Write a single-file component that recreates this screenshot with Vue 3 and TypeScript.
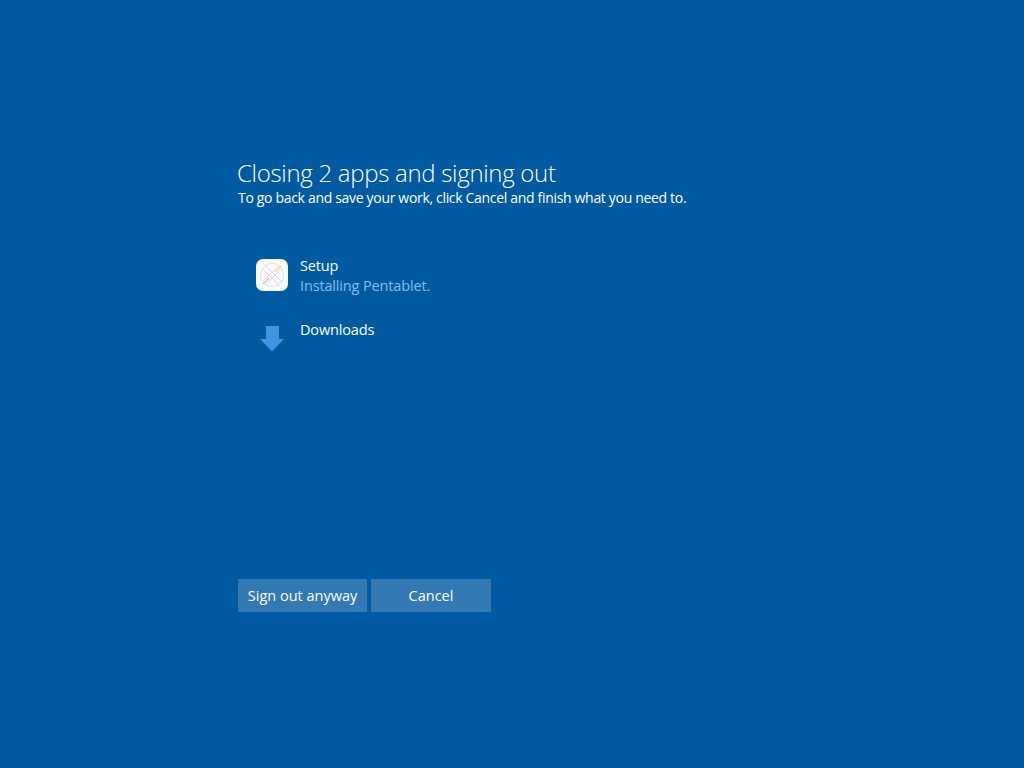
<script setup lang="ts">
const apps = [
  { name: 'Setup', status: 'Installing Pentablet.', icon: 'setup' },
  { name: 'Downloads', status: '', icon: 'down' },
]
</script>

<template>
  <div class="screen">
    <h1 class="title">Closing 2 apps and signing out</h1>
    <p class="sub">To go back and save your work, click Cancel and finish what you need to.</p>
    <ul class="apps">
      <li v-for="a in apps" :key="a.name" class="app">
        <svg v-if="a.icon === 'setup'" class="icon" width="32" height="32" viewBox="0 0 32 32">
          <rect width="32" height="32" rx="7" fill="#fbfcfd" />
          <path d="M5.5 20.5A11.5 11.5 0 0 1 10 6" fill="none" stroke="#ecd9de" stroke-width="1" />
          <path d="M10 6A11.5 11.5 0 0 1 26 10" fill="none" stroke="#f3e3cb" stroke-width="1" />
          <path d="M26 10A11.5 11.5 0 0 1 22 26" fill="none" stroke="#d5e1f0" stroke-width="1" />
          <path d="M22 26A11.5 11.5 0 0 1 5.5 20.5" fill="none" stroke="#e4e0ec" stroke-width="1" />
          <path d="M8.5 5.5L26.5 23.5M5.5 8.5L23.5 26.5" fill="none" stroke="#e3d3d9" stroke-width="1" />
          <path d="M23.5 5.5L5.5 23.5M26.5 8.5L8.5 26.5" fill="none" stroke="#eedcc8" stroke-width="1" />
          <path d="M7 25L13 19" stroke="#b4c4de" stroke-width="1.2" />
          <path d="M19 13L25 7" stroke="#f0d2aa" stroke-width="1.2" />
        </svg>
        <svg v-else class="icon" width="32" height="32" viewBox="0 0 32 32">
          <path d="M10 3H23V16H28L16 28.5L4 16H10Z" fill="#4193e6" />
        </svg>
        <div class="info">
          <div class="name">{{ a.name }}</div>
          <div v-if="a.status" class="status">{{ a.status }}</div>
        </div>
      </li>
    </ul>
    <div class="actions">
      <button class="btn first">Sign out anyway</button>
      <button class="btn second">Cancel</button>
    </div>
  </div>
</template>

<style>
html, body { margin: 0; background: #005aa1; }
</style>

<style scoped>
.screen {
  box-sizing: border-box;
  width: 1024px;
  height: 768px;
  background: #005aa1;
  padding: 158px 0 0 237px;
  color: #fff;
  font-family: "Open Sans", "Noto Sans", sans-serif;
  display: flex;
  flex-direction: column;
  overflow: hidden;
}
.title {
  margin: 0;
  font-size: 24px;
  line-height: 30px;
  font-weight: 300;
  letter-spacing: -0.3px;
}
.sub {
  margin: 0 0 0 1px;
  font-size: 14px;
  line-height: 20px;
  letter-spacing: -0.32px;
}
.apps {
  list-style: none;
  margin: 48px 0 0 19px;
  padding: 0;
  display: flex;
  flex-direction: column;
  gap: 16px;
}
.app {
  display: flex;
  gap: 12px;
  height: 48px;
}
.icon { margin-top: 3px; flex: none; }
.name, .status {
  font-size: 14.5px;
  line-height: 20px;
  letter-spacing: -0.15px;
}
.status { color: #85bcf0; }
.actions {
  margin: 211px 0 0 1px;
  display: flex;
  gap: 4px;
}
.btn {
  height: 33px;
  border: 0;
  padding: 0;
  background: #3379b3;
  color: #fff;
  font: inherit;
  font-size: 14.5px;
}
.first { width: 129px; }
.second { width: 120px; }
</style>
